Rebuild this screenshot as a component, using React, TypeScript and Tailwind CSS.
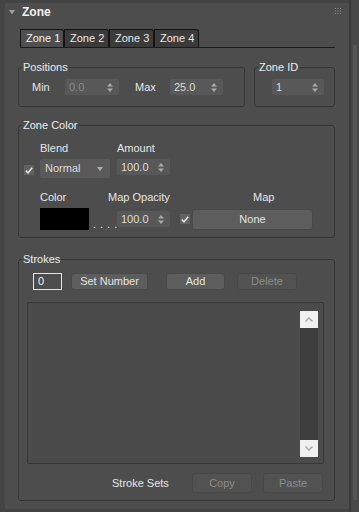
import { ReactNode } from "react";

const Arrows = () => (
  <svg width="6" height="9" viewBox="0 0 6 9" className="shrink-0">
    <path d="M3 0 L6 3.5 L0 3.5 Z" fill="#a8a8a8" />
    <path d="M3 9 L6 5.5 L0 5.5 Z" fill="#a8a8a8" />
  </svg>
);

const Spinner = ({
  value,
  width,
  disabled,
}: {
  value: string;
  width: string;
  disabled?: boolean;
}) => (
  <div
    className={`${width} h-[16px] flex items-center justify-between pl-[4px] pr-[6px] bg-[#585858] rounded-[2px] ${
      disabled ? "text-[#8a8a8a]" : "text-[#dcdcdc]"
    }`}
  >
    <span>{value}</span>
    <Arrows />
  </div>
);

const Check = () => (
  <div className="w-[10px] h-[10px] bg-[#626262] flex items-center justify-center shrink-0">
    <svg width="8" height="7" viewBox="0 0 8 7">
      <path d="M0.8 3.6 L3 5.8 L7.2 0.8" stroke="#e2e2e2" strokeWidth="1.5" fill="none" />
    </svg>
  </div>
);

const Button = ({
  children,
  width,
  disabled,
  height = "h-[17px]",
}: {
  children: ReactNode;
  width: string;
  disabled?: boolean;
  height?: string;
}) => (
  <div
    className={`${width} ${height} flex items-center justify-center rounded-[3px] border ${
      disabled
        ? "bg-[#525252] border-[#484848] text-[#8c8c8c]"
        : "bg-[#5d5d5d] border-[#494949] text-[#e4e4e4]"
    }`}
  >
    {children}
  </div>
);

const Group = ({
  title,
  className,
  children,
}: {
  title: string;
  className: string;
  children: ReactNode;
}) => (
  <fieldset className={`border border-[#363636] rounded-[3px] ${className}`}>
    <legend className="ml-[3px] px-[1px] leading-[13px] text-[#ececec]">{title}</legend>
    {children}
  </fieldset>
);

const ScrollBtn = ({ up }: { up?: boolean }) => (
  <div className="w-[18px] h-[17px] bg-[#f0f0f0] flex items-center justify-center">
    <svg width="8" height="5" viewBox="0 0 8 5">
      <path
        d={up ? "M0.5 4.5 L4 1 L7.5 4.5" : "M0.5 0.5 L4 4 L7.5 0.5"}
        stroke="#a9a9a9"
        strokeWidth="1.5"
        fill="none"
      />
    </svg>
  </div>
);

export default function App() {
  return (
    <div className="w-[359px] h-[512px] bg-[#444444] flex font-['Liberation_Sans',sans-serif] text-[11px] leading-[13px] text-[#e6e6e6] overflow-hidden">
      <div className="ml-[5px] mt-[3px] w-[344px] h-[506px] bg-[#4d4d4d] rounded-[2px] flex flex-col">
        {/* header */}
        <div className="h-[18px] flex items-center pl-[4px] pr-[8px]">
          <svg width="6" height="5" viewBox="0 0 6 5" className="mt-[1px]">
            <path d="M0 0 L6 0 L3 4.5 Z" fill="#a0a0a0" />
          </svg>
          <span className="ml-[7px] font-bold text-[12px] text-[#f2f2f2]">Zone</span>
          <svg width="6" height="6" viewBox="0 0 6 6" className="ml-auto mt-[-3px]">
            {[0, 2.5, 5].map((y) =>
              [0, 2.5, 5].map((x) => (
                <rect key={`${x}-${y}`} x={x} y={y} width="1" height="1" fill="#8a8a8a" />
              ))
            )}
          </svg>
        </div>

        {/* tabs */}
        <div className="mt-[8px] ml-[15px] w-[315px] flex items-end border-b border-[#1b1b1b]">
          {["Zone 1", "Zone 2", "Zone 3", "Zone 4"].map((t, i) => (
            <div
              key={t}
              className={`h-[18px] pl-[5px] flex items-center whitespace-nowrap border border-b-0 border-[#141414] rounded-tr-[3px] ${
                i === 0 ? "w-[44px] bg-[#4f4f4f] text-[#f0f0f0]" : "w-[45px] bg-[#3b3b3b] text-[#e8e8e8]"
              }`}
            >
              {t}
            </div>
          ))}
        </div>

        {/* positions + zone id */}
        <div className="mt-[13px] ml-[13px] flex gap-[9px]">
          <Group title="Positions" className="w-[227px] h-[46px]">
            <div className="mt-[5px] h-[16px] flex items-center">
              <span className="ml-[13px] w-[33px]">Min</span>
              <Spinner value="0.0" width="w-[54px]" disabled />
              <span className="ml-[16px] w-[35px]">Max</span>
              <Spinner value="25.0" width="w-[53px]" />
            </div>
          </Group>
          <Group title="Zone ID" className="w-[81px] h-[46px]">
            <div className="mt-[5px] h-[16px] flex items-center">
              <div className="ml-[17px]">
                <Spinner value="1" width="w-[52px]" />
              </div>
            </div>
          </Group>
        </div>

        {/* zone color */}
        <Group title="Zone Color" className="mt-[12px] ml-[13px] w-[317px] h-[119px]">
          <div className="mt-[10px] h-[13px] flex">
            <span className="ml-[21px] w-[77px]">Blend</span>
            <span>Amount</span>
          </div>
          <div className="mt-[4px] h-[19px] flex items-start">
            <div className="ml-[5px] mt-[6px]">
              <Check />
            </div>
            <div className="ml-[6px] w-[70px] h-[19px] bg-[#5a5a5a] rounded-[2px] flex items-center justify-between pl-[5px] pr-[7px] text-[#dcdcdc]">
              <span>Normal</span>
              <svg width="6" height="4" viewBox="0 0 6 4">
                <path d="M0 0 L6 0 L3 4 Z" fill="#b0b0b0" />
              </svg>
            </div>
            <div className="ml-[7px]">
              <Spinner value="100.0" width="w-[53px]" />
            </div>
          </div>
          <div className="mt-[13px] h-[13px] flex">
            <span className="ml-[21px] w-[68px]">Color</span>
            <span className="w-[120px]">Map Opacity</span>
            <span className="ml-[25px]">Map</span>
          </div>
          <div className="mt-[4px] h-[22px] flex items-start">
            <div className="ml-[21px] w-[49px] h-[22px] bg-black" />
            <span className="ml-[4px] w-[24px] mt-[10px] tracking-[4px] text-[#e6e6e6]">....</span>
            <div className="mt-[3px]">
              <Spinner value="100.0" width="w-[53px]" />
            </div>
            <div className="ml-[10px] mt-[6px]">
              <Check />
            </div>
            <div className="ml-[2px] mt-[1px]">
              <Button width="w-[121px]" height="h-[21px]">
                None
              </Button>
            </div>
          </div>
        </Group>

        {/* strokes */}
        <Group title="Strokes" className="mt-[15px] ml-[13px] w-[317px] h-[248px]">
          <div className="mt-[7px] h-[17px] flex items-center">
            <div className="ml-[14px] w-[29px] h-[17px] border border-[#e6e6e6] flex items-center pl-[4px] text-[#f0f0f0]">
              0
            </div>
            <div className="ml-[9px]">
              <Button width="w-[77px]">Set Number</Button>
            </div>
            <div className="ml-[18px]">
              <Button width="w-[59px]">Add</Button>
            </div>
            <div className="ml-[12px]">
              <Button width="w-[60px]" disabled>
                Delete
              </Button>
            </div>
          </div>
          <div className="mt-[12px] ml-[8px] w-[297px] h-[162px] border border-[#383838] rounded-[2px] bg-[#4b4b4b] flex justify-end pr-[5px] pt-[8px]">
            <div className="flex flex-col">
              <ScrollBtn up />
              <div className="h-[112px] bg-[#3e3e3e]" />
              <ScrollBtn />
            </div>
          </div>
          <div className="mt-[9px] h-[20px] flex items-center">
            <span className="ml-[93px] w-[80px]">Stroke Sets</span>
            <Button width="w-[60px]" height="h-[20px]" disabled>
              Copy
            </Button>
            <div className="ml-[11px]">
              <Button width="w-[60px]" height="h-[20px]" disabled>
                Paste
              </Button>
            </div>
          </div>
        </Group>
      </div>

      {/* outer scroll strip */}
      <div className="w-[10px] h-full flex">
        <div className="w-[2px] h-full bg-[#3a3a3a]" />
        <div className="flex-1 bg-[#474747] pl-[2px]">
          <div className="mt-[45px] w-[4px] h-[455px] bg-[#555555] rounded-[1px]" />
        </div>
      </div>
    </div>
  );
}
